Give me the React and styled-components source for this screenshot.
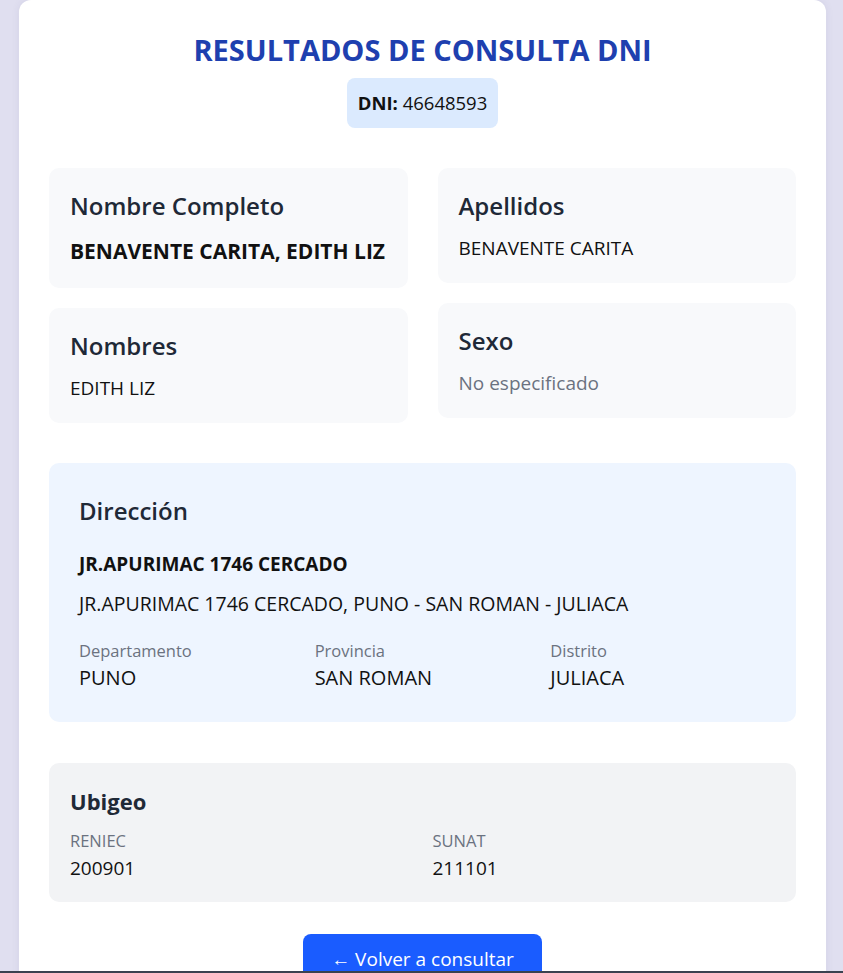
import React from 'react'
import styled, { createGlobalStyle } from 'styled-components'

const GlobalStyle = createGlobalStyle`
    * { box-sizing: border-box; }
    body {
        margin: 0;
        background: #e0dff0;
        font-family: "Open Sans", "Noto Sans", sans-serif;
        color: #111;
    }
`

const Page = styled.div`
    padding: 0 17px 0 19px;
`

const Card = styled.main`
    background: #fff;
    border-radius: 12px;
    box-shadow: 0 0 8px rgba(60, 60, 120, 0.08);
    padding: 30px 30px 40px;
`

const Header = styled.header`
    display: flex;
    flex-direction: column;
    align-items: center;
    gap: 8px;
    margin-bottom: 40px;
`

const Title = styled.h1`
    margin: 0;
    font-size: 29px;
    line-height: 40px;
    font-weight: 700;
    color: #1e40af;
`

const Badge = styled.div`
    background: #dbeafe;
    border-radius: 8px;
    padding: 11px 11px;
    font-size: 18.5px;
    line-height: 28px;
    color: #111;
    b { font-weight: 700; }
`

const InfoGrid = styled.div`
    display: grid;
    grid-template-columns: 1fr 1fr;
    gap: 30px;
    align-items: start;
    margin-bottom: 40px;
`

const InfoColumn = styled.div`
    display: flex;
    flex-direction: column;
    gap: 20px;
`

const InfoCard = styled.div`
    background: #f8f9fb;
    border-radius: 10px;
    padding: 20px 21px;
`

const InfoTitle = styled.h3`
    margin: 0 0 10px;
    font-size: 24px;
    line-height: 36px;
    font-weight: 600;
    color: #1f2937;
`

const InfoValue = styled.div`
    font-size: ${p => p.$strong ? 21 : 19}px;
    line-height: ${p => p.$strong ? 34 : 29}px;
    font-weight: ${p => p.$strong ? 700 : 400};
    color: ${p => p.$muted ? '#6b7280' : '#111'};
`

const Section = styled.section`
    background: ${p => p.$tint};
    border-radius: 10px;
    padding: ${p => p.$pad};
    margin-bottom: ${p => p.$after}px;
`

const SectionTitle = styled.h3`
    margin: 0 0 ${p => p.$gap}px;
    font-size: ${p => p.$size}px;
    line-height: 36px;
    font-weight: ${p => p.$weight};
    color: #1f2937;
`

const AddressMain = styled.div`
    font-size: 19px;
    line-height: 30px;
    font-weight: 700;
    margin-bottom: 10px;
`

const AddressFull = styled.div`
    font-size: 19.5px;
    line-height: 30px;
    margin-bottom: 20px;
`

const FieldGrid = styled.div`
    display: grid;
    grid-template-columns: repeat(${p => p.$cols}, 1fr);
    gap: 20px;
`

const Label = styled.div`
    font-size: 16.5px;
    line-height: 24px;
    color: #6b7280;
    margin-bottom: 1px;
`

const Value = styled.div`
    font-size: ${p => p.$size || 19}px;
    line-height: 28px;
    color: #111;
`

const Actions = styled.div`
    display: flex;
    justify-content: center;
`

const BackButton = styled.button`
    background: #1a5cff;
    color: #fff;
    border: none;
    border-radius: 8px;
    padding: 12px 28px;
    font-family: inherit;
    font-size: 19px;
    line-height: 26px;
    cursor: pointer;
`

const BottomBar = styled.div`
    position: fixed;
    left: 0;
    right: 0;
    bottom: 0;
    height: 2px;
    background: #3b4250;
`

export default function App() {
    return (
        <Page>
            <GlobalStyle />
            <Card>
                <Header>
                    <Title>RESULTADOS DE CONSULTA DNI</Title>
                    <Badge><b>DNI:</b> 46648593</Badge>
                </Header>

                <InfoGrid>
                    <InfoColumn>
                        <InfoCard>
                            <InfoTitle>Nombre Completo</InfoTitle>
                            <InfoValue $strong>BENAVENTE CARITA, EDITH LIZ</InfoValue>
                        </InfoCard>
                        <InfoCard>
                            <InfoTitle>Nombres</InfoTitle>
                            <InfoValue>EDITH LIZ</InfoValue>
                        </InfoCard>
                    </InfoColumn>
                    <InfoColumn>
                        <InfoCard>
                            <InfoTitle>Apellidos</InfoTitle>
                            <InfoValue>BENAVENTE CARITA</InfoValue>
                        </InfoCard>
                        <InfoCard>
                            <InfoTitle>Sexo</InfoTitle>
                            <InfoValue $muted>No especificado</InfoValue>
                        </InfoCard>
                    </InfoColumn>
                </InfoGrid>

                <Section $tint="#eef5ff" $pad="30px 30px 30px" $after={41}>
                    <SectionTitle $size={24} $weight={600} $gap={20}>Dirección</SectionTitle>
                    <AddressMain>JR.APURIMAC 1746 CERCADO</AddressMain>
                    <AddressFull>JR.APURIMAC 1746 CERCADO, PUNO - SAN ROMAN - JULIACA</AddressFull>
                    <FieldGrid $cols={3}>
                        <div><Label>Departamento</Label><Value $size={20}>PUNO</Value></div>
                        <div><Label>Provincia</Label><Value $size={20}>SAN ROMAN</Value></div>
                        <div><Label>Distrito</Label><Value $size={20}>JULIACA</Value></div>
                    </FieldGrid>
                </Section>

                <Section $tint="#f2f3f5" $pad="20px 21px 20px" $after={32}>
                    <SectionTitle $size={22} $weight={700} $gap={10}>Ubigeo</SectionTitle>
                    <FieldGrid $cols={2}>
                        <div><Label>RENIEC</Label><Value>200901</Value></div>
                        <div><Label>SUNAT</Label><Value>211101</Value></div>
                    </FieldGrid>
                </Section>

                <Actions>
                    <BackButton>← Volver a consultar</BackButton>
                </Actions>
            </Card>
            <BottomBar />
        </Page>
    )
}
